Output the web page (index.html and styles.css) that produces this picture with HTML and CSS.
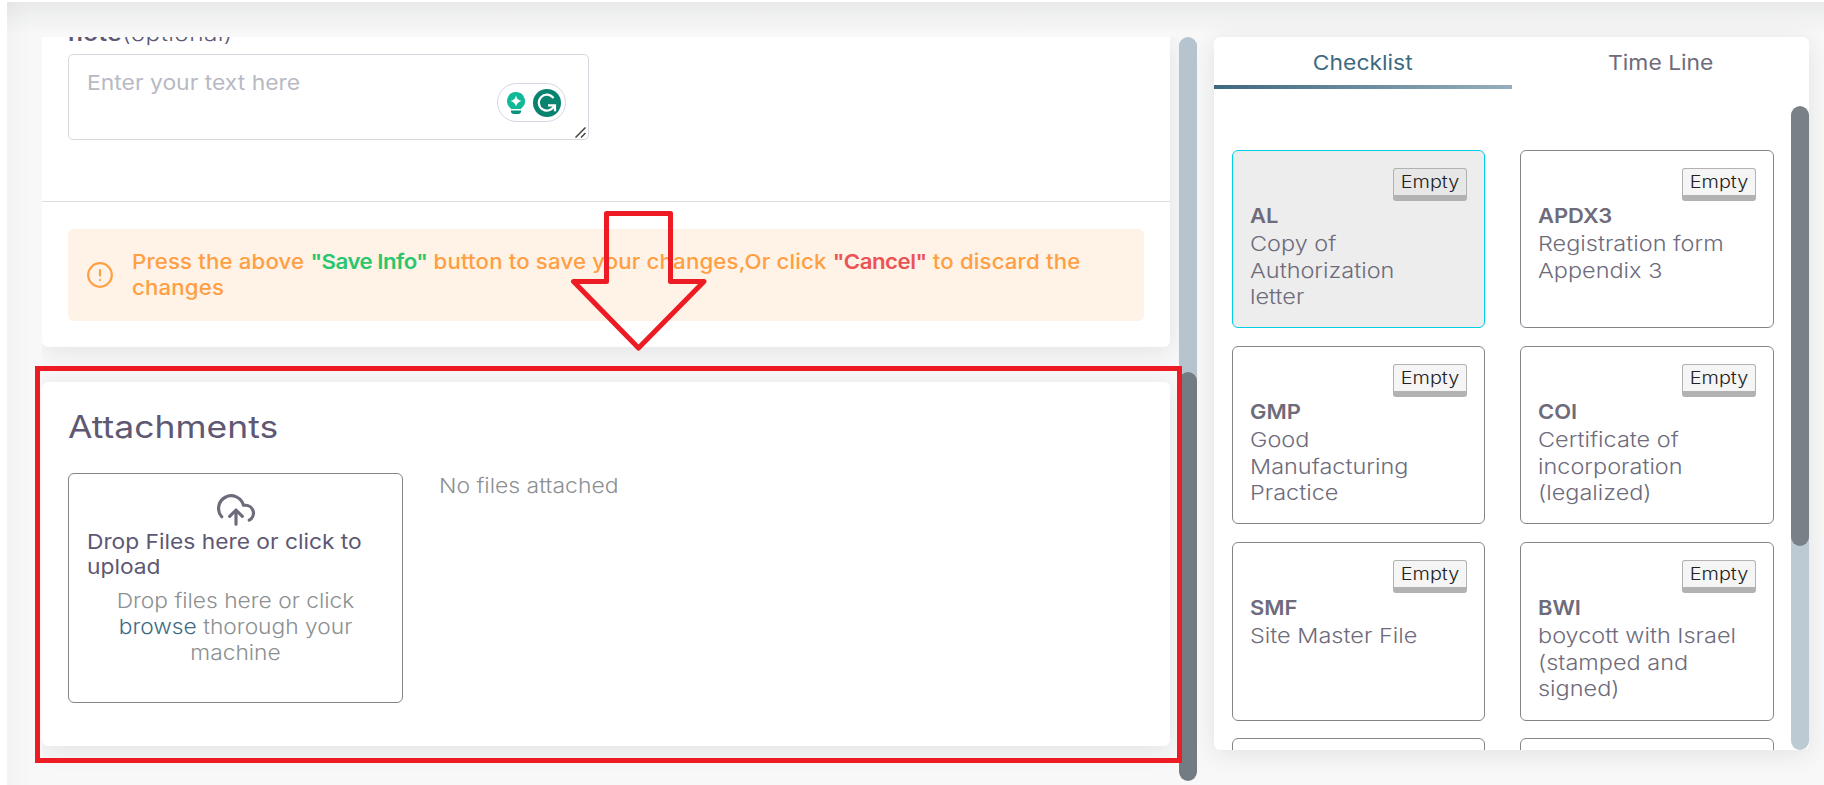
FILE: index.html
```
<!DOCTYPE html>
<html lang="en">
<head>
<meta charset="utf-8">
<title>Attachments</title>
<link rel="stylesheet" href="styles.css">
</head>
<body>
<div class="page">
  <div class="topbar"></div>
  <main class="content">
    <section class="pane">
      <div class="pane-body">
        <div class="card form-card">
          <div class="field">
            <label class="label"><b>note</b>(optional)</label>
            <div class="textarea">
              <div class="placeholder">Enter your text here</div>
              <div class="assist">
                <svg width="20" height="24" viewBox="0 0 20 24"><path d="M10 1a9 9 0 0 0-5.3 16.2V18h10.6v-.8A9 9 0 0 0 10 1z" fill="#0fb897"/><path d="M10 4.5Q11 9 15.500 10 11 11 10 15.500 9 11 4.500 10 9 9 10 4.500z" fill="#fff"/><path d="M5 19.500h10v1.500q-.5 2-2.500 2h-5q-2 0-2.500-2z" fill="#06927c"/></svg>
                <svg width="28" height="28" viewBox="0 0 28 28"><circle cx="14" cy="14" r="14" fill="#08836f"/><path d="M20.500 9.200A8 8 0 1 0 21.500 16" fill="none" stroke="#fff" stroke-width="2.200"/><path d="M15 16.300h7v6" fill="none" stroke="#fff" stroke-width="2.200"/></svg>
              </div>
              <svg class="grip" width="11" height="11" viewBox="0 0 11 11"><path d="M.5 10.500l10-10M6 10.500l4.500-4.500" stroke="#444" stroke-width="1.500"/></svg>
            </div>
          </div>
          <div class="alert">
            <svg width="26" height="26" viewBox="0 0 26 26" fill="none" stroke="#ff9f43" stroke-width="2.200" stroke-linecap="round"><circle cx="13" cy="13" r="11.800"/><path d="M13 8v5.500M13 18v.1"/></svg>
            <p class="alert-text">Press the above <b class="save">"Save Info"</b> button to save your changes,Or click <b class="cancel">"Cancel"</b> to discard the<br>changes</p>
          </div>
        </div>
        <div class="card files-card">
          <h2 class="heading">Attachments</h2>
          <div class="files">
            <div class="dropzone">
              <svg class="cloud" width="38" height="38" viewBox="0 0 24 24" fill="none" stroke="#6e6b7b" stroke-width="2" stroke-linecap="round" stroke-linejoin="round"><path d="M16 16l-4-4-4 4M12 12v9"/><path d="M20.390 18.390A5 5 0 0 0 18 9h-1.260A8 8 0 1 0 3 16.300"/></svg>
              <div class="drop-title">Drop Files here or click to<br>upload</div>
              <p class="drop-hint">Drop files here or click<br><a class="link">browse</a> thorough your<br>machine</p>
            </div>
            <p class="no-files">No files attached</p>
          </div>
        </div>
      </div>
      <div class="scrollbar"><div class="thumb thumb-main"></div></div>
    </section>
    <aside class="side">
      <nav class="tabs"><div class="tab active"><div class="tab-text">Checklist</div></div><div class="tab"><div class="tab-text">Time Line</div></div></nav>
      <div class="side-body">
        <div class="grid">
          <div class="item selected"><button class="badge"><span class="badge-text">Empty</span></button><h3 class="code">AL</h3><p class="desc">Copy of<br>Authorization<br>letter</p></div>
          <div class="item"><button class="badge"><span class="badge-text">Empty</span></button><h3 class="code">APDX3</h3><p class="desc">Registration form<br>Appendix 3</p></div>
          <div class="item"><button class="badge"><span class="badge-text">Empty</span></button><h3 class="code">GMP</h3><p class="desc">Good<br>Manufacturing<br>Practice</p></div>
          <div class="item"><button class="badge"><span class="badge-text">Empty</span></button><h3 class="code">COI</h3><p class="desc">Certificate of<br>incorporation<br>(legalized)</p></div>
          <div class="item"><button class="badge"><span class="badge-text">Empty</span></button><h3 class="code">SMF</h3><p class="desc">Site Master File</p></div>
          <div class="item"><button class="badge"><span class="badge-text">Empty</span></button><h3 class="code">BWI</h3><p class="desc">boycott with Israel<br>(stamped and<br>signed)</p></div>
          <div class="item"></div>
          <div class="item"></div>
        </div>
        <div class="scrollbar side-bar"><div class="thumb thumb-side"></div></div>
      </div>
    </aside>
  </main>
  <svg class="markup" width="1824" height="785" viewBox="0 0 1824 785" fill="none" stroke="#ed1c24" stroke-width="5"><rect x="37.500" y="368.500" width="1142" height="392"/><path stroke-linejoin="round" d="M606.500 213.500h64v68h33.500l-65.500 66.500-65-66.500h33z"/></svg>
</div>
</body>
</html>
```
FILE: styles.css
```
* { box-sizing: border-box; }
body { margin: 0; background: #fff; font-family: Inter, "Open Sans", sans-serif; font-size: 20.5px; color: #6e6b7b; }
p, h2, h3 { margin: 0; font-weight: 400; }
.page { position: relative; width: 1824px; height: 785px; padding-left: 7px; overflow: hidden; display: flex; flex-direction: column; white-space: nowrap; }
.topbar { height: 2px; background: #fff; flex: none; }
.content { flex: 1; display: flex; gap: 17px; padding: 35px 15px 0 35px; background: linear-gradient(180deg, rgba(34,47,41,.07), rgba(34,41,47,0) 32px), linear-gradient(90deg, rgba(34,41,47,.025), rgba(34,41,47,0) 24px), #f8f8f8; }
.pane { width: 1155px; height: 744px; display: flex; flex: none; }
.pane-body { width: 1137px; height: 744px; overflow: hidden; }
.card { width: 1128px; background: #fff; border-radius: 6px; box-shadow: 0 4px 24px rgba(34,41,47,.1); }
.form-card { height: 310px; border-radius: 0 0 6px 6px; }
.field { height: 165px; padding: 0 26px; border-bottom: 1px solid #dcdfe2; display: flex; flex-direction: column; }

/* Widened lettering */
.label, .placeholder, .alert-text, .heading, .drop-title, .no-files, .code, .desc { transform-origin: 0 50%; }
.label { margin-top: -16px; height: 33px; line-height: 26px; font-size: 21px; font-weight: 350; letter-spacing: .3px; color: #5e5873; transform: scaleX(1.165); }
.label b { font-weight: 600; }
.textarea { width: 521px; height: 86px; border: 1px solid #d8d6de; border-radius: 5px; padding: 14px 18px; position: relative; line-height: 28px; }
.placeholder { color: #b9b9c3; font-weight: 370; transform: scaleX(1.117); }
.assist { position: absolute; left: 428px; top: 28px; width: 69px; height: 39px; border: 1px solid #d5d6e3; border-radius: 20px; background: #fff; display: flex; align-items: center; gap: 7px; padding-left: 8px; }
.grip { position: absolute; right: 2px; bottom: 1px; }
.alert { margin: 27px 26px 0; height: 92px; border-radius: 6px; background: #fff2e6; display: flex; align-items: center; gap: 19px; padding-left: 19px; color: #ff9f43; }
.alert-text { line-height: 26px; font-weight: 450; letter-spacing: .14px; transform: scaleX(1.084); }
.alert b { font-weight: 600; letter-spacing: -.45px; }
.save { color: #28c76f; }
.cancel { color: #ea5455; }
.files-card { margin-top: 35px; height: 364px; padding: 25px 26px 0; }
.heading { font-size: 31px; line-height: 40px; font-weight: 400; color: #5e5873; transform: scaleX(1.145); }
.files { display: flex; gap: 36px; margin-top: 26px; }
.dropzone { width: 335px; height: 230px; border: 1px solid #82868b; border-radius: 6px; padding: 17px 18px 0; }
.cloud { display: block; margin: 0 auto; }
.drop-title { line-height: 25px; font-weight: 410; color: #5e5873; transform: scaleX(1.11); }
.drop-hint { text-align: center; line-height: 26px; font-weight: 350; color: #8c9092; margin-top: 9px; transform: scaleX(1.11); }
.link { color: #3d6a82; }
.no-files { line-height: 26px; font-weight: 350; color: #8c9092; transform: scaleX(1.118); }
.scrollbar { width: 18px; height: 744px; border-radius: 9px; background: #b5c4ce; flex: none; overflow: hidden; }
.thumb { border-radius: 9px; background: #747c83; }
.thumb-main { margin-top: 335px; height: 409px; }
.side { width: 595px; height: 713px; background: #fff; border-radius: 6px; box-shadow: 0 4px 24px rgba(34,41,47,.1); overflow: hidden; }
.tabs { display: flex; height: 52px; }
.tab { flex: 1; text-align: center; line-height: 52px; font-weight: 420; }
.tab-text { transform: scaleX(1.115); }
.active { color: #3d6a82; border-bottom: 4px solid; border-image: linear-gradient(90deg, #3d687f, #97afbc) 1; }
.side-body { display: flex; justify-content: space-between; margin-top: 17px; height: 644px; overflow: hidden; }
.grid { display: grid; grid-template-columns: 253px 254px; grid-auto-rows: 178.400px; gap: 17.700px 35px; padding: 44px 0 0 18px; }
.item { border: 1px solid #82868b; border-radius: 6px; padding: 17px 17px 0 17px; display: flex; flex-direction: column; align-items: flex-start; }
.selected { background: #ededed; border-color: #00cfe8; }
.badge { align-self: flex-end; width: 74px; height: 33px; padding: 0; border: 1px solid #b2b2b2; border-bottom-width: 6px; border-radius: 3px; background: rgba(214,214,214,.25); font: 350 17px/26px Inter, sans-serif; color: #222; }
.badge-text { display: block; transform: scaleX(1.17); }
.code { font-size: 20.5px; line-height: 28px; font-weight: 600; margin-top: 1px; transform: scaleX(1.07); }
.desc { line-height: 26.500px; font-weight: 350; margin-top: 1px; transform: scaleX(1.145); }
.side-bar { height: 644px; background: #bccad3; }
.thumb-side { height: 440px; background: #798186; }
.markup { position: absolute; left: 0; top: 0; }
```
